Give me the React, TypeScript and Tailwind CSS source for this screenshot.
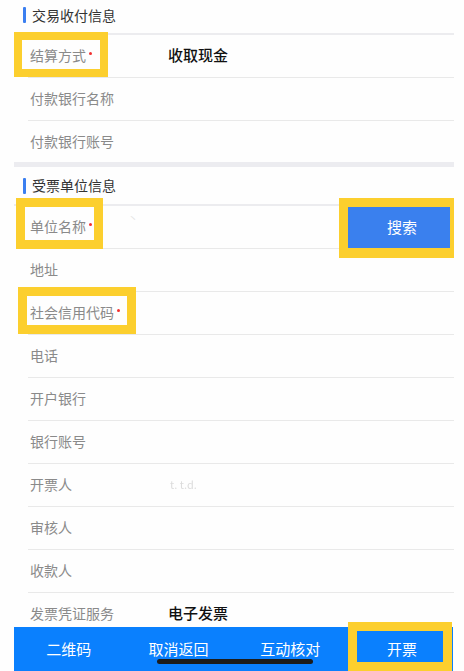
import React from "react";

type Row = {
  label: string;
  required?: boolean;
  value?: string;
};

const font = { fontFamily: '"Noto Sans CJK SC", "Noto Sans", sans-serif' };

function SectionHeader({ title, tall }: { title: string; tall?: boolean }) {
  return (
    <div className={`flex items-center border-b-2 border-[#ececef] ${tall ? "h-[39px]" : "h-[35px] pb-[3px]"}`}>
      <span className="ml-[9px] w-[3px] h-[16px] bg-[#3b7ff0] rounded-[1px]" />
      <span className="ml-[6px] text-[14px] text-[#333]">{title}</span>
    </div>
  );
}

function FormRow({ row, last, children }: { row: Row; last?: boolean; children?: React.ReactNode }) {
  return (
    <div className={`relative ml-[14px] flex items-center ${last ? "h-[41px]" : "h-[43px] border-b border-[#e9e9e9] pb-[2px]"}`}>
      <span className="pl-[2px] w-[140px] text-[14px] text-[#8a8a8a] flex items-center">
        {row.label}
        {row.required && <span className="ml-[3px] mb-[3px] w-[3px] h-[3px] rounded-full bg-[#f23030]" />}
      </span>
      {row.value && <span className="text-[15px] font-medium text-[#111]">{row.value}</span>}
      {children}
    </div>
  );
}

export default function App() {
  const payRows: Row[] = [
    { label: "结算方式", required: true, value: "收取现金" },
    { label: "付款银行名称" },
    { label: "付款银行账号" },
  ];

  const buyerRows: Row[] = [
    { label: "地址" },
    { label: "社会信用代码", required: true },
    { label: "电话" },
    { label: "开户银行" },
    { label: "银行账号" },
    { label: "开票人" },
    { label: "审核人" },
    { label: "收款人" },
    { label: "发票凭证服务", value: "电子发票" },
  ];

  return (
    <div className="relative w-[464px] h-[671px] bg-[#fefefe] overflow-hidden" style={font}>
      <div className="ml-[14px] mr-[10px]">
        {/* 交易收付信息 */}
        <SectionHeader title="交易收付信息" />
        <FormRow row={payRows[0]}>
          <span className="absolute left-[-14px] top-[-3px] w-[94px] h-[45px] border-[8px] border-[#fccf2e]" />
        </FormRow>
        <FormRow row={payRows[1]} />
        <FormRow row={payRows[2]} last />
        <div className="h-[5px] bg-[#ececf0]" />

        {/* 受票单位信息 */}
        <SectionHeader title="受票单位信息" tall />
        <FormRow row={{ label: "单位名称", required: true }}>
          <span className="absolute left-[-12px] top-[-8px] w-[87px] h-[51px] border-[9px] border-[#fccf2e]" />
          <span className="absolute left-[100px] top-[4px] text-[10px] text-[#e4e4e4]">丶</span>
          <div className="absolute right-0 top-[-8px] w-[115px] h-[60px] bg-[#fccf2e] pl-[9px] pt-[9px] pr-[4px] pb-[10px]">
            <button className="w-full h-full bg-[#3a80ee] text-white text-[15px] pl-[6px]">搜索</button>
          </div>
        </FormRow>
        {buyerRows.map((row, i) => (
          <FormRow key={row.label} row={row} last={i === buyerRows.length - 1}>
            {row.label === "社会信用代码" && (
              <span className="absolute left-[-10px] top-[-5px] w-[118px] h-[47px] border-[9px] border-[#fccf2e]" />
            )}
            {row.label === "开票人" && (
              <span className="absolute left-[142px] text-[11px] text-[#dcdcdc] blur-[0.5px]">t. t.d.</span>
            )}
          </FormRow>
        ))}
      </div>

      {/* Bottom action bar */}
      <div className="absolute left-[14px] bottom-0 w-[439px] h-[44px] bg-[#0a80fe] grid grid-cols-4 text-white text-[15px]">
        <div className="flex items-center justify-center">二维码</div>
        <div className="flex items-center justify-center">取消返回</div>
        <div className="flex items-center justify-center pl-[4px]">互动核对</div>
        <div className="relative flex items-center justify-center pl-[8px]">
          <span className="absolute left-[5px] top-[-5px] w-[104px] h-[49px] border-[9px] border-[#fccf2e]" />
          <span className="relative">开票</span>
        </div>
      </div>
      <div className="absolute left-[157px] top-[659px] w-[156px] h-[5px] rounded-full bg-[#1c1c1c]" />
    </div>
  );
}
